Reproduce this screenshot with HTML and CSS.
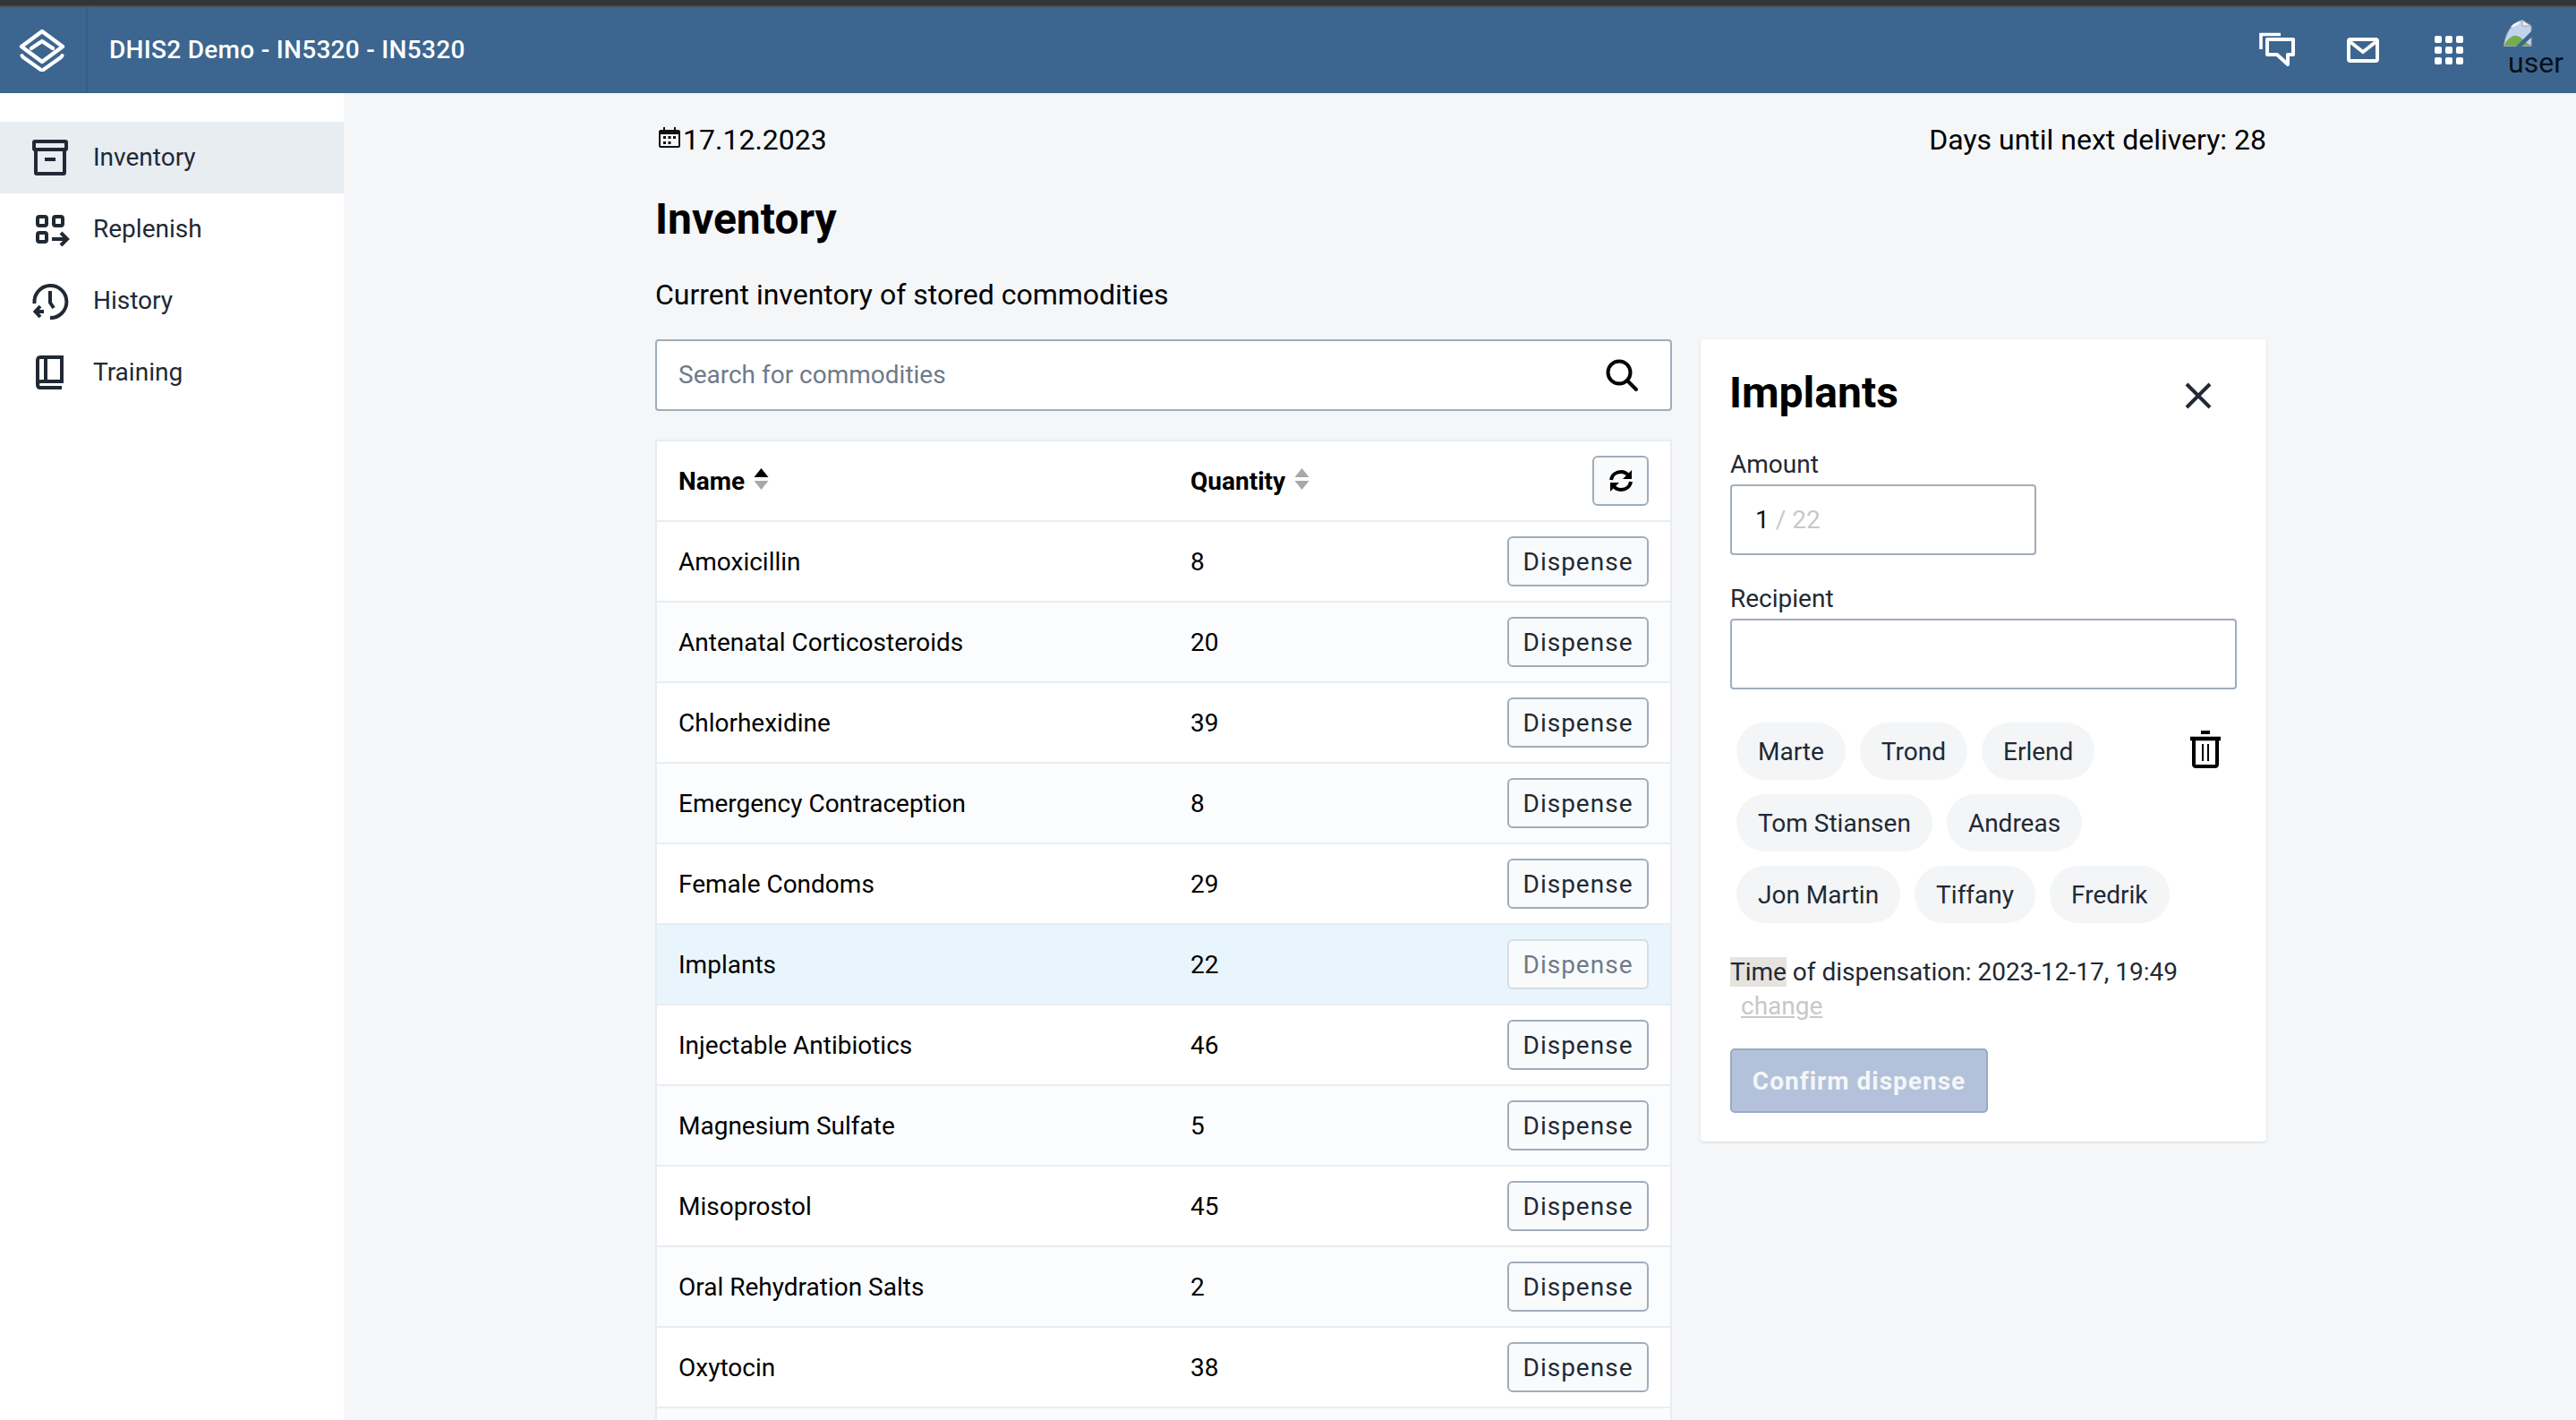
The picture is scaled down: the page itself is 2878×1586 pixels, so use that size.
FILE: index.html
```html
<!DOCTYPE html>
<html lang="en">
<head>
    <meta charset="UTF-8">
    <title>Inventory</title>
    <link rel="stylesheet" href="styles.css">
</head>
<body>
    <div class="topstrip"></div>
    <header class="headerbar">
        <div class="logo">
            <svg width="52" height="48" viewBox="0 0 52 48" fill="none" stroke="#fff" stroke-width="4.4" stroke-linejoin="round" stroke-linecap="round">
                <path d="M26 3 L49 20 L26 37 L3 20 Z"/>
                <path d="M14 22 L26 14 L38 22"/>
                <path d="M3.5 30 C4 31 4 31 5 32 L26 47 L47 32 C48 31 48 31 48.5 30" stroke-width="4"/>
            </svg>
        </div>
        <div class="appname">DHIS2 Demo - IN5320 - IN5320</div>
        <div class="headericons">
            <svg class="hicon-chat" width="44" height="44" viewBox="0 0 44 44" fill="none" stroke="#fff" stroke-width="4">
                <path d="M3 21 V4.5 H25" stroke-width="3.6"/>
                <path d="M10 10 H39 V27 H33 V38 L21 27 H10 Z" stroke-linejoin="round"/>
            </svg>
            <svg class="hicon-mail" width="36" height="28" viewBox="0 0 36 28" fill="none" stroke="#fff" stroke-width="4">
                <rect x="2" y="2" width="32" height="24" rx="2"/>
                <path d="M4 5 L18 16 L32 5"/>
            </svg>
            <svg class="hicon-apps" width="34" height="34" viewBox="0 0 34 34" fill="#fff">
                <rect x="1" y="1" width="8" height="8" rx="2"/><rect x="13" y="1" width="8" height="8" rx="2"/><rect x="25" y="1" width="8" height="8" rx="2"/>
                <rect x="1" y="13" width="8" height="8" rx="2"/><rect x="13" y="13" width="8" height="8" rx="2"/><rect x="25" y="13" width="8" height="8" rx="2"/>
                <rect x="1" y="25" width="8" height="8" rx="2"/><rect x="13" y="25" width="8" height="8" rx="2"/><rect x="25" y="25" width="8" height="8" rx="2"/>
            </svg>
            <div class="usermenu">
                <svg width="32" height="30" viewBox="0 0 32 30">
                    <path d="M0.5 29.5 C2 14 10 3 21 0.5 L31 7 V29.5 Z" fill="#c3d3ee" stroke="#9da3a8" stroke-width="1"/>
                    <path d="M8 8 C11 4 15 3 19 2 C17 6 12 8 8 8 Z" fill="#f4f7fc"/>
                    <path d="M21 0.5 V7 H31 Z" fill="#f2f2f2" stroke="#9da3a8" stroke-width="1"/>
                    <path d="M1 29 C4 21 10 17 15 18 C19 19 21 21 23 24 L31 29 Z" fill="#73ad4f"/>
                    <path d="M32 12 L14 30 H20 L32 19 Z" fill="#3c6690"/>
                </svg>
                <span class="username">user</span>
            </div>
        </div>
    </header>

    <div class="layout">
        <!-- Side navigation -->
        <nav class="sidebar">
            <a class="navitem active" href="#">
                <svg width="48" height="48" viewBox="0 0 48 48" fill="none" stroke="#212934" stroke-width="4">
                    <rect x="6" y="6" width="36" height="9" rx="1"/>
                    <path d="M8 15 V41 C8 42 8 42 9 42 H39 C40 42 40 42 40 41 V15"/>
                    <path d="M18 26 H30"/>
                </svg>
                <span class="navlabel">Inventory</span>
            </a>
            <a class="navitem" href="#">
                <svg width="48" height="48" viewBox="0 0 48 48" fill="none" stroke="#212934" stroke-width="4">
                    <rect x="10" y="10" width="10" height="10" rx="2"/>
                    <rect x="28" y="10" width="10" height="10" rx="2"/>
                    <rect x="10" y="28" width="10" height="10" rx="2"/>
                    <path d="M26 35 H43 M36 28 L43 35 L36 42"/>
                </svg>
                <span class="navlabel">Replenish</span>
            </a>
            <a class="navitem" href="#">
                <svg width="48" height="48" viewBox="0 0 48 48" fill="none" stroke="#212934" stroke-width="4">
                    <path d="M6.5 27 A18 18 0 1 1 24 43"/>
                    <path d="M24 13 V26 L28 32"/>
                    <path d="M17 36 H8 M13 30 L7.5 36 L13 42"/>
                </svg>
                <span class="navlabel">History</span>
            </a>
            <a class="navitem" href="#">
                <svg width="48" height="48" viewBox="0 0 48 48" fill="none" stroke="#212934" stroke-width="4">
                    <path d="M37 35 V7 H13 C10 7 10 9 10 11 V37 C10 40 11 41 13 41 H37"/>
                    <path d="M19 7 V33"/>
                    <path d="M10 37 C10 35 12 34 14 34 H39"/>
                </svg>
                <span class="navlabel">Training</span>
            </a>
        </nav>

        <main class="content">
            <div class="toprow">
                <div class="date">
                    <svg class="calendar" width="26" height="26" viewBox="0 0 26 26">
                        <path d="M3 4 H23 C24 4 25 5 25 6 V22 C25 23 24 24 23 24 H3 C2 24 1 23 1 22 V6 C1 5 2 4 3 4 Z M3 9 V22 H23 V9 Z" fill="#111" fill-rule="evenodd"/>
                        <rect x="6" y="1" width="2" height="5" fill="#111"/><rect x="18" y="1" width="2" height="5" fill="#111"/>
                        <rect x="6" y="11" width="3" height="3" fill="#111"/><rect x="11.5" y="11" width="3" height="3" fill="#111"/><rect x="17" y="11" width="3" height="3" fill="#111"/>
                        <rect x="6" y="17" width="3" height="3" fill="#111"/><rect x="11.5" y="17" width="3" height="3" fill="#111"/>
                    </svg>
                    17.12.2023
                </div>
                <div>Days until next delivery: 28</div>
            </div>
            <h1 class="pagetitle">Inventory</h1>
            <p class="subtitle">Current inventory of stored commodities</p>

            <div class="columns">
                <div class="leftcol">
                    <div class="searchbox">
                        <span class="placeholder">Search for commodities</span>
                        <svg width="40" height="40" viewBox="0 0 40 40" fill="none" stroke="#000" stroke-width="4" stroke-linecap="round">
                            <circle cx="17" cy="17" r="12.5"/>
                            <path d="M26 26 L36 36"/>
                        </svg>
                    </div>

                    <div class="stocktable">
                        <div class="tablerow headrow">
                            <div class="cell-name">Name
                                <svg class="sort" width="19" height="26" viewBox="0 0 18 26"><path d="M9 1 L17 11 H1 Z" fill="#000"/><path d="M1 15 H17 L9 25 Z" fill="#a8a8a8"/></svg>
                            </div>
                            <div class="cell-qty">Quantity
                                <svg class="sort" width="19" height="26" viewBox="0 0 18 26"><path d="M9 1 L17 11 H1 Z" fill="#a8a8a8"/><path d="M1 15 H17 L9 25 Z" fill="#a8a8a8"/></svg>
                            </div>
                            <button class="btn refresh">
                                <svg width="28" height="28" viewBox="0 0 28 28" fill="none" stroke="#000" stroke-width="4">
                                    <path d="M3 13 C4 7 9 4 14 4 C18 4 21 6 23 9"/>
                                    <path d="M25 15 C24 21 19 24 14 24 C10 24 7 22 5 19"/>
                                    <path d="M26 2 V12 H16 Z" fill="#000" stroke="none"/>
                                    <path d="M2 26 V16 H12 Z" fill="#000" stroke="none"/>
                                </svg>
                            </button>
                        </div>
                        <div class="tablerow"><div class="cell-name">Amoxicillin</div><div class="cell-qty">8</div><button class="btn">Dispense</button></div>
                        <div class="tablerow"><div class="cell-name">Antenatal Corticosteroids</div><div class="cell-qty">20</div><button class="btn">Dispense</button></div>
                        <div class="tablerow"><div class="cell-name">Chlorhexidine</div><div class="cell-qty">39</div><button class="btn">Dispense</button></div>
                        <div class="tablerow"><div class="cell-name">Emergency Contraception</div><div class="cell-qty">8</div><button class="btn">Dispense</button></div>
                        <div class="tablerow"><div class="cell-name">Female Condoms</div><div class="cell-qty">29</div><button class="btn">Dispense</button></div>
                        <div class="tablerow selected"><div class="cell-name">Implants</div><div class="cell-qty">22</div><button class="btn disabled">Dispense</button></div>
                        <div class="tablerow"><div class="cell-name">Injectable Antibiotics</div><div class="cell-qty">46</div><button class="btn">Dispense</button></div>
                        <div class="tablerow"><div class="cell-name">Magnesium Sulfate</div><div class="cell-qty">5</div><button class="btn">Dispense</button></div>
                        <div class="tablerow"><div class="cell-name">Misoprostol</div><div class="cell-qty">45</div><button class="btn">Dispense</button></div>
                        <div class="tablerow"><div class="cell-name">Oral Rehydration Salts</div><div class="cell-qty">2</div><button class="btn">Dispense</button></div>
                        <div class="tablerow"><div class="cell-name">Oxytocin</div><div class="cell-qty">38</div><button class="btn">Dispense</button></div>
                        <div class="tablerow"></div>
                    </div>
                </div>

                <!-- Dispense panel -->
                <aside class="panel">
                    <div class="panelhead">
                        <h2>Implants</h2>
                        <svg class="closeicon" width="30" height="30" viewBox="0 0 30 30" fill="none" stroke="#212934" stroke-width="4">
                            <path d="M2 2 L28 28 M28 2 L2 28"/>
                        </svg>
                    </div>
                    <label class="fieldlabel">Amount</label>
                    <div class="inputbox amount"><span>1</span><span class="maxamount">&nbsp;/ 22</span></div>
                    <label class="fieldlabel recipient">Recipient</label>
                    <div class="inputbox"></div>
                    <div class="chiparea">
                        <div class="chips">
                            <span class="chip">Marte</span>
                            <span class="chip">Trond</span>
                            <span class="chip">Erlend</span>
                            <span class="chip">Tom Stiansen</span>
                            <span class="chip">Andreas</span>
                            <span class="chip">Jon Martin</span>
                            <span class="chip">Tiffany</span>
                            <span class="chip">Fredrik</span>
                        </div>
                        <svg class="trash" width="36" height="42" viewBox="0 0 36 42" fill="none" stroke="#000" stroke-width="4">
                            <path d="M1 9 H35" stroke-width="4.5"/>
                            <rect x="13" y="0" width="10" height="4" fill="#000" stroke="none"/>
                            <path d="M5 9 V38 C5 39 6 40 7 40 H29 C30 40 31 39 31 38 V9"/>
                            <path d="M15 15 V34 M21 15 V34" stroke-width="2"/>
                        </svg>
                    </div>
                    <p class="timeline"><span class="marked">Time</span> of dispensation: 2023-12-17, 19:49</p>
                    <a class="changelink" href="#">change</a>
                    <button class="confirm">Confirm dispense</button>
                </aside>
            </div>
        </main>
    </div>
</body>
</html>
```

FILE: styles.css
```css
html, body {
    margin: 0;
    padding: 0;
    height: 1586px;
    overflow: hidden;
}
body {
    font-family: Roboto, 'Liberation Sans', sans-serif;
    background-color: #f4f6f8;
    color: #000;
}
.topstrip {
    height: 6px;
    background: #333438;
    border-bottom: 2px solid #4a4c50;
}
.headerbar {
    display: flex;
    align-items: center;
    height: 96px;
    background: #3c6690;
    color: #fff;
}
.logo {
    display: flex;
    align-items: center;
    justify-content: center;
    box-sizing: border-box;
    width: 98px;
    height: 96px;
    padding-right: 2px;
    border-right: 2px solid #365d84;
}
.appname {
    margin-left: 24px;
    margin-bottom: 1px;
    font-size: 28px;
    font-weight: 500;
    letter-spacing: 0.3px;
}
.headericons {
    display: flex;
    align-items: center;
    margin-left: auto;
}
.hicon-chat {
    margin-right: 55px;
}
.hicon-mail {
    margin-right: 61px;
}
.hicon-apps {
    margin-right: 44px;
}
.usermenu {
    display: flex;
    flex-direction: column;
    align-items: flex-start;
    width: 81px;
    height: 78px;
    margin-top: 7px;
    margin-bottom: -3px;
}
.username {
    margin-left: 5px;
    margin-top: -1px;
    font-size: 32px;
    line-height: 38px;
    color: #0b0f14;
}

.layout {
    display: flex;
    height: 1482px;
}
.sidebar {
    flex: none;
    box-sizing: border-box;
    width: 384px;
    padding-top: 32px;
    background: #fff;
}
.navitem {
    display: flex;
    align-items: center;
    gap: 24px;
    height: 80px;
    padding-left: 32px;
    font-size: 28px;
    color: #212934;
    text-decoration: none;
}
.navitem.active {
    background: #e8edf2;
}
.navlabel {
    margin-bottom: 2px;
}

.content {
    flex: none;
    width: 1800px;
    padding-left: 348px;
}
.toprow {
    display: flex;
    justify-content: space-between;
    align-items: center;
    height: 38px;
    margin-top: 33px;
    font-size: 32px;
}
.date {
    display: flex;
    align-items: center;
}
.calendar {
    margin: -4px 2px 0 3px;
}
.pagetitle {
    margin: 42px 0 0;
    font-size: 48px;
    line-height: 56px;
    font-weight: 700;
}
.subtitle {
    margin: 36px 0 0;
    font-size: 32px;
    line-height: 40px;
}
.columns {
    display: grid;
    grid-template-columns: 1136px 632px;
    gap: 32px;
    align-items: start;
    margin-top: 30px;
}
.searchbox {
    display: flex;
    align-items: center;
    justify-content: space-between;
    box-sizing: border-box;
    height: 80px;
    padding: 0 34px 0 24px;
    background: #fff;
    border: 2px solid #a0adba;
    border-radius: 4px;
}
.placeholder {
    margin-bottom: 1px;
    font-size: 28px;
    color: #6e7a8a;
}

.stocktable {
    margin-top: 32px;
    background: #fff;
    border: 2px solid #e8edf2;
    border-bottom: 0;
}
.tablerow {
    display: flex;
    align-items: center;
    box-sizing: border-box;
    height: 90px;
    padding: 0 24px;
    border-bottom: 2px solid #e8edf2;
    font-size: 28px;
    color: #000;
}
.tablerow:nth-child(odd) {
    background: #fbfcfd;
}
.tablerow.selected {
    background: #e8f5fd;
}
.headrow {
    font-weight: 700;
}
.headrow.tablerow {
    background: #fff;
}
.cell-name {
    display: flex;
    align-items: center;
    gap: 9px;
    width: 572px;
}
.cell-qty {
    display: flex;
    align-items: center;
    gap: 9px;
    flex: 1;
}
.sort {
    margin-top: -4px;
}
.btn {
    flex: none;
    box-sizing: border-box;
    width: 158px;
    height: 56px;
    padding: 0;
    background: #f9fafb;
    border: 2px solid #a0adba;
    border-radius: 6px;
    font-family: inherit;
    font-size: 28px;
    letter-spacing: 1px;
    color: #212934;
}
.btn.refresh {
    display: flex;
    align-items: center;
    justify-content: center;
    width: 63px;
}
.btn.disabled {
    border-color: #d5dde5;
    color: #6e7a8a;
}

.panel {
    box-sizing: border-box;
    height: 896px;
    padding: 32px 33px 0;
    background: #fff;
    border-radius: 4px;
    box-shadow: 0 1px 3px rgba(33, 41, 52, 0.12);
}
.panelhead {
    display: flex;
    align-items: center;
    justify-content: space-between;
    height: 56px;
}
.panelhead h2 {
    margin: 0 0 0 -1px;
    font-size: 48px;
    font-weight: 700;
    line-height: 56px;
}
.closeicon {
    margin-right: 28px;
    margin-top: 5px;
}
.fieldlabel {
    display: block;
    margin-top: 36px;
    font-size: 28px;
    line-height: 32px;
    color: #212934;
}
.fieldlabel.recipient {
    margin-top: 33px;
}
.inputbox {
    display: flex;
    align-items: center;
    box-sizing: border-box;
    height: 79px;
    margin-top: 6px;
    padding-left: 26px;
    border: 2px solid #a0adba;
    border-radius: 4px;
    font-size: 28px;
}
.inputbox.amount {
    width: 342px;
    color: #111;
}
.maxamount {
    color: #c8c8c8;
}
.chiparea {
    display: flex;
    justify-content: space-between;
    margin-top: 37px;
}
.chips {
    display: flex;
    flex-wrap: wrap;
    gap: 16px;
    width: 500px;
    margin-left: 7px;
}
.chip {
    display: flex;
    align-items: center;
    height: 64px;
    padding: 0 24px;
    background: #f3f5f7;
    border-radius: 32px;
    font-size: 28px;
    color: #212934;
}
.trash {
    margin: 9px 17px 0 0;
}
.timeline {
    margin: 36px 0 0;
    font-size: 28px;
    line-height: 38px;
    color: #212934;
}
.marked {
    background: #e6e3de;
    color: #212934;
}
.changelink {
    display: block;
    margin-top: 1px;
    margin-left: 12px;
    font-size: 28px;
    line-height: 36px;
    color: #c8c8c8;
}
.confirm {
    display: block;
    box-sizing: border-box;
    width: 288px;
    height: 72px;
    margin-top: 29px;
    padding: 0;
    background: #b3c2da;
    border: 2px solid #9aa9c4;
    border-radius: 5px;
    font-family: inherit;
    font-size: 28px;
    font-weight: 700;
    letter-spacing: 1px;
    color: #f4f6f8;
}
```
